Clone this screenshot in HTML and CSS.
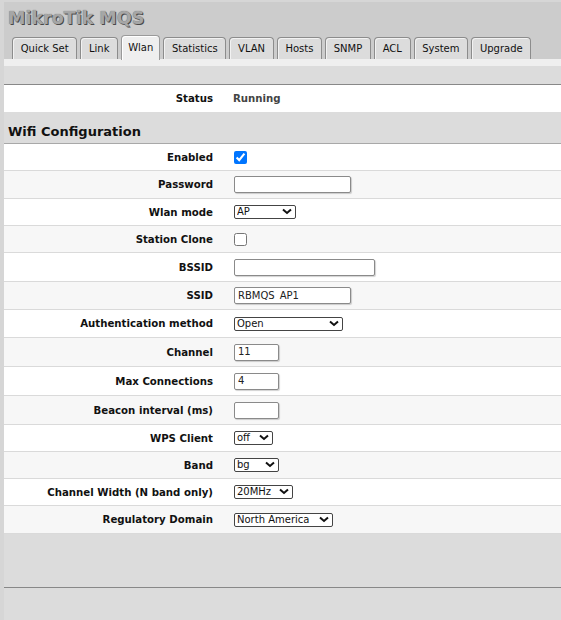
FILE: index.html
```html
<!DOCTYPE html>
<html lang="en">
<head>
    <meta charset="UTF-8">
    <meta name="viewport" content="width=device-width, initial-scale=1.0">
    <title>MikroTik MQS - Wlan</title>
    <link rel="stylesheet" href="styles.css">
</head>
<body>
    <div class="page">
        <div class="header">
            <div class="title">MikroTik MQS</div>
            <ul class="tabs">
                <li>Quick Set</li>
                <li>Link</li>
                <li class="active">Wlan</li>
                <li>Statistics</li>
                <li>VLAN</li>
                <li>Hosts</li>
                <li>SNMP</li>
                <li>ACL</li>
                <li>System</li>
                <li>Upgrade</li>
            </ul>
        </div>
        <div class="subbar"></div>
        <div class="toolbar"></div>

        <table class="grid status">
            <tr>
                <td class="label">Status</td>
                <td class="value running">Running</td>
            </tr>
        </table>

        <h2 class="section">Wifi Configuration</h2>

        <table class="grid form">
            <tr>
                <td class="label">Enabled</td>
                <td class="value"><input type="checkbox" checked></td>
            </tr>
            <tr class="mid">
                <td class="label">Password</td>
                <td class="value"><input type="password" class="w-md"></td>
            </tr>
            <tr>
                <td class="label">Wlan mode</td>
                <td class="value">
                    <span class="select">
                        <select class="s-mode"><option>AP</option><option>Station</option></select>
                        <svg width="10" height="7" viewBox="0 0 10 7"><path d="M1 1.5 L5 5 L9 1.5" fill="none" stroke="#111" stroke-width="2"/></svg>
                    </span>
                </td>
            </tr>
            <tr>
                <td class="label">Station Clone</td>
                <td class="value"><input type="checkbox"></td>
            </tr>
            <tr class="tall">
                <td class="label">BSSID</td>
                <td class="value"><input type="text" class="w-lg"></td>
            </tr>
            <tr class="mid">
                <td class="label">SSID</td>
                <td class="value"><input type="text" class="w-md" value="RBMQS_AP1"></td>
            </tr>
            <tr class="mid">
                <td class="label">Authentication method</td>
                <td class="value">
                    <span class="select">
                        <select class="s-auth"><option>Open</option><option>WPA2 PSK</option></select>
                        <svg width="10" height="7" viewBox="0 0 10 7"><path d="M1 1.5 L5 5 L9 1.5" fill="none" stroke="#111" stroke-width="2"/></svg>
                    </span>
                </td>
            </tr>
            <tr class="tall">
                <td class="label">Channel</td>
                <td class="value"><input type="text" class="w-sm" value="11"></td>
            </tr>
            <tr class="tall">
                <td class="label">Max Connections</td>
                <td class="value"><input type="text" class="w-sm" value="4"></td>
            </tr>
            <tr class="tall">
                <td class="label">Beacon interval (ms)</td>
                <td class="value"><input type="text" class="w-sm"></td>
            </tr>
            <tr>
                <td class="label">WPS Client</td>
                <td class="value">
                    <span class="select">
                        <select class="s-wps"><option>off</option><option>on</option></select>
                        <svg width="10" height="7" viewBox="0 0 10 7"><path d="M1 1.5 L5 5 L9 1.5" fill="none" stroke="#111" stroke-width="2"/></svg>
                    </span>
                </td>
            </tr>
            <tr>
                <td class="label">Band</td>
                <td class="value">
                    <span class="select">
                        <select class="s-band"><option>bg</option><option>n</option></select>
                        <svg width="10" height="7" viewBox="0 0 10 7"><path d="M1 1.5 L5 5 L9 1.5" fill="none" stroke="#111" stroke-width="2"/></svg>
                    </span>
                </td>
            </tr>
            <tr>
                <td class="label">Channel Width (N band only)</td>
                <td class="value">
                    <span class="select">
                        <select class="s-width"><option>20MHz</option><option>40MHz</option></select>
                        <svg width="10" height="7" viewBox="0 0 10 7"><path d="M1 1.5 L5 5 L9 1.5" fill="none" stroke="#111" stroke-width="2"/></svg>
                    </span>
                </td>
            </tr>
            <tr class="mid">
                <td class="label">Regulatory Domain</td>
                <td class="value">
                    <span class="select">
                        <select class="s-reg"><option>North America</option><option>Europe</option></select>
                        <svg width="10" height="7" viewBox="0 0 10 7"><path d="M1 1.5 L5 5 L9 1.5" fill="none" stroke="#111" stroke-width="2"/></svg>
                    </span>
                </td>
            </tr>
        </table>

        <div class="bottom"></div>
    </div>
</body>
</html>
```

FILE: styles.css
```css
body {
    margin: 0;
    background: #d6d6d6;
    font-family: "DejaVu Sans", Verdana, sans-serif;
    font-size: 10.2px;
    color: #111;
}
.page {
    margin: 2px 0 0 4px;
    background: #dcdcdc;
    min-height: 618px;
}
.header {
    background: #cccccc;
    padding: 6px 0 0 0;
    height: 51px;
    position: relative;
}
.title {
    font-size: 17.5px;
    font-weight: bold;
    color: #a6a6a6;
    text-shadow: 1px 1px 0 #4a4a4a, 0 0 1px #666;
    padding-left: 4px;
    line-height: 20px;
}
.tabs {
    list-style: none;
    margin: 0;
    padding: 0 0 0 8px;
    display: flex;
    align-items: flex-end;
    gap: 3px;
    position: absolute;
    left: 0;
    bottom: 0;
}
.tabs li {
    height: 21px;
    line-height: 21px;
    padding: 0 7.7px;
    font-size: 10px;
    background: #dcdcdc;
    border: 1px solid #8c8c8c;
    border-bottom: none;
    border-radius: 4px 4px 0 0;
    box-shadow: inset 1px 1px 0 #f2f2f2;
    color: #111;
}
.tabs li.active {
    height: 24px;
    line-height: 24px;
    padding: 0 6px;
    background: #efefef;
    border-color: #9a9a9a;
    box-shadow: inset 1px 1px 0 #fff;
    margin-bottom: -1px;
    position: relative;
}
.subbar {
    height: 7px;
    background: #efefef;
}
.toolbar {
    height: 18px;
    background: #dcdcdc;
    border-bottom: 1px solid #888;
}
.grid {
    width: 100%;
    border-collapse: collapse;
}
.grid td {
    height: 26px;
    padding: 0;
    vertical-align: middle;
}
.grid .label {
    width: 199px;
    padding: 0 10px;
    text-align: right;
    font-weight: bold;
}
.grid .value {
    padding-left: 10px;
}
.status td {
    background: #fff;
    height: 27px;
}
.running {
    font-weight: bold;
    color: #444;
}
.section {
    margin: 0;
    height: 31px;
    line-height: 39px;
    padding-left: 4px;
    font-size: 13px;
    background: #dcdcdc;
    border-bottom: 1px solid #a8a8a8;
    color: #111;
}
.form tr {
    border-bottom: 1px solid #dadada;
}
.form tr:nth-child(odd) td {
    background: #fff;
}
.form tr:nth-child(even) td {
    background: #f7f7f7;
}
.form tr.mid td {
    height: 27px;
}
.form tr.tall td {
    height: 28px;
}
input[type="checkbox"] {
    width: 13px;
    height: 13px;
    margin: 0 0 0 1px;
    vertical-align: middle;
}
input[type="text"],
input[type="password"] {
    box-sizing: border-box;
    height: 17px;
    margin: 0 0 0 1px;
    padding: 0 3px 1px;
    border: 1px solid #8a8a8a;
    border-radius: 2px;
    box-shadow: 1px 1px 1px rgba(0,0,0,0.18);
    font-family: "DejaVu Sans", Verdana, sans-serif;
    font-size: 10px;
    line-height: 14px;
    color: #222;
    vertical-align: middle;
}
.w-sm { width: 45px; }
.w-md { width: 117px; }
.w-lg { width: 141px; }
.select {
    position: relative;
    display: inline-block;
    margin-left: 1px;
    vertical-align: middle;
    line-height: 0;
}
.select svg {
    position: absolute;
    right: 4px;
    top: 3px;
    pointer-events: none;
}
select {
    -webkit-appearance: none;
    appearance: none;
    box-sizing: border-box;
    height: 14px;
    margin: 0;
    padding: 0 0 0 2px;
    border: 1px solid #444;
    border-radius: 2px;
    background: #fff;
    font-family: "DejaVu Sans", Verdana, sans-serif;
    font-size: 10px;
    line-height: 12px;
    color: #111;
}
.s-mode { width: 62px; }
.s-auth { width: 109px; }
.s-wps { width: 39px; }
.s-band { width: 45px; }
.s-width { width: 59px; }
.s-reg { width: 99px; }
.bottom {
    height: 53px;
    background: #dcdcdc;
    border-bottom: 1px solid #888;
}
```
